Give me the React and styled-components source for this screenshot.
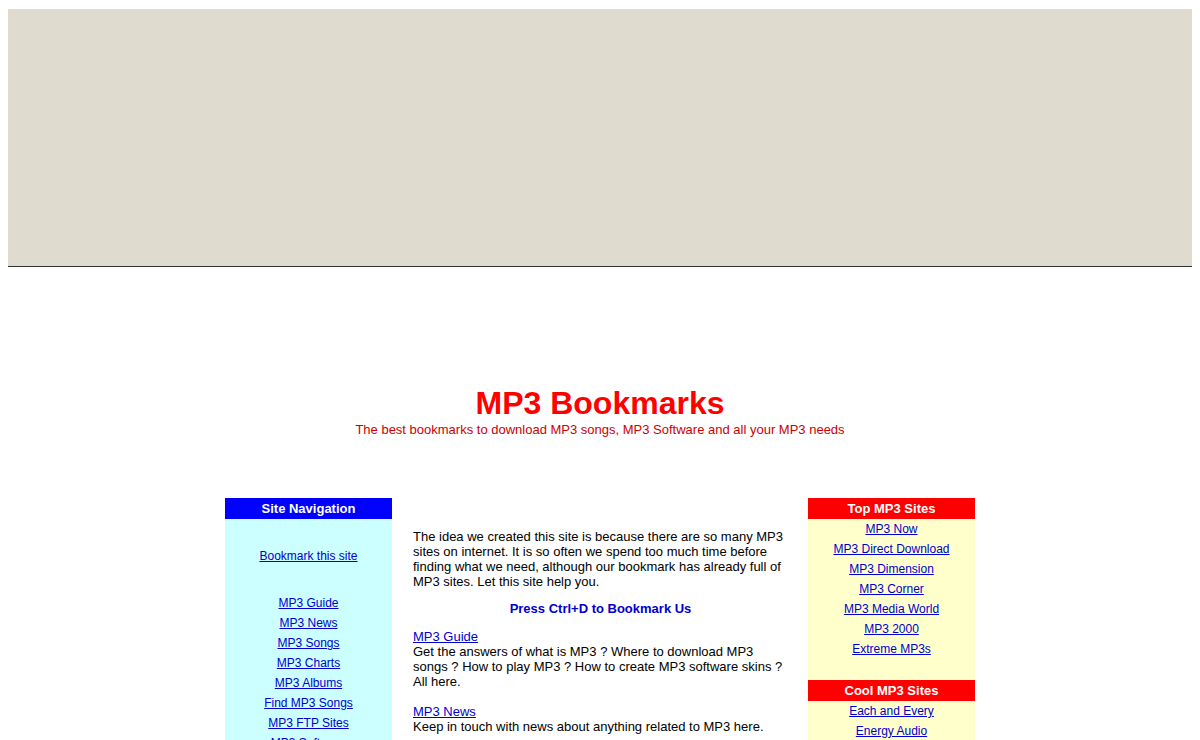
import React from 'react';
import styled, { createGlobalStyle } from 'styled-components';

const navLinks = [
  'MP3 Guide',
  'MP3 News',
  'MP3 Songs',
  'MP3 Charts',
  'MP3 Albums',
  'Find MP3 Songs',
  'MP3 FTP Sites',
  'MP3 Software',
  'MP3 Players',
  'MP3 Skins',
];

const topSites = [
  'MP3 Now',
  'MP3 Direct Download',
  'MP3 Dimension',
  'MP3 Corner',
  'MP3 Media World',
  'MP3 2000',
  'Extreme MP3s',
];

const coolSites = ['Each and Every', 'Energy Audio', 'MP3 Place', 'Free MP3s'];

const sections = [
  {
    title: 'MP3 Guide',
    text: 'Get the answers of what is MP3 ? Where to download MP3 songs ? How to play MP3 ? How to create MP3 software skins ? All here.',
  },
  {
    title: 'MP3 News',
    text: 'Keep in touch with news about anything related to MP3 here.',
  },
  {
    title: 'MP3 Songs',
    text: 'Find the latest MP3 songs from your favourite artists.',
  },
];

const App = () => {
  return (
    <>
      <GlobalStyle />
      <Banner />
      <Masthead>
        <Title>MP3 Bookmarks</Title>
        <Tagline>
          The best bookmarks to download MP3 songs, MP3 Software and all your MP3 needs
        </Tagline>
      </Masthead>
      <Layout>
        <SideColumn bg="#ccffff">
          <BoxHeader bg="#0000ff">Site Navigation</BoxHeader>
          <LinkList spaced>
            <li><a href="#">Bookmark this site</a></li>
          </LinkList>
          <LinkList>
            {navLinks.map(name => (
              <li key={name}><a href="#">{name}</a></li>
            ))}
          </LinkList>
        </SideColumn>

        <Main>
          <Intro>
            The idea we created this site is because there are so many MP3 sites on
            internet. It is so often we spend too much time before finding what we need,
            although our bookmark has already full of MP3 sites. Let this site help you.
          </Intro>
          <Callout>Press Ctrl+D to Bookmark Us</Callout>
          {sections.map(s => (
            <Entry key={s.title}>
              <a href="#">{s.title}</a>
              <br />
              {s.text}
            </Entry>
          ))}
        </Main>

        <SideColumn bg="#ffffcc">
          <BoxHeader bg="#ff0000">Top MP3 Sites</BoxHeader>
          <LinkList>
            {topSites.map(name => (
              <li key={name}><a href="#">{name}</a></li>
            ))}
          </LinkList>
          <BoxHeader bg="#ff0000" gap>Cool MP3 Sites</BoxHeader>
          <LinkList>
            {coolSites.map(name => (
              <li key={name}><a href="#">{name}</a></li>
            ))}
          </LinkList>
        </SideColumn>
      </Layout>
    </>
  );
};

const GlobalStyle = createGlobalStyle`
  body {
    margin: 8px;
    background: #fff;
    font-family: Arial, "Liberation Sans", sans-serif;
    color: #000;
  }
  a {
    color: #0000cc;
    text-decoration: underline;
  }
`;

const Banner = styled.div`
  height: 257px;
  margin-top: 1px;
  background: #dfdbcf;
  border-bottom: 1px solid #333;
`;

const Masthead = styled.div`
  padding-top: 118px;
  text-align: center;
`;

const Title = styled.h1`
  margin: 0;
  font-size: 32px;
  line-height: 37px;
  font-weight: bold;
  color: #ff0000;
`;

const Tagline = styled.div`
  font-size: 13px;
  line-height: 15px;
  color: #cc0000;
`;

const Layout = styled.div`
  display: grid;
  grid-template-columns: 167px 416px 167px;
  width: 750px;
  margin: 61px auto 0;
  align-items: stretch;
`;

const SideColumn = styled.div`
  background: ${props => props.bg};
  text-align: center;
  padding-bottom: 20px;
`;

const BoxHeader = styled.div`
  background: ${props => props.bg};
  color: #fff;
  font-size: 13px;
  font-weight: bold;
  line-height: 21px;
  height: 21px;
  margin-top: ${props => (props.gap ? '21px' : '0')};
`;

const LinkList = styled.ul`
  list-style: none;
  margin: 0;
  padding: ${props => (props.spaced ? '27px 0' : '0')};
  font-size: 12px;
  line-height: 20px;
`;

const Main = styled.div`
  padding: 31px 20px 0 21px;
  font-size: 13px;
  line-height: 15px;
`;

const Intro = styled.p`
  margin: 0 0 12px;
`;

const Callout = styled.p`
  margin: 0 0 13px;
  text-align: center;
  font-weight: bold;
  color: #0000cc;
`;

const Entry = styled.p`
  margin: 0 0 15px;
`;

export default App;
